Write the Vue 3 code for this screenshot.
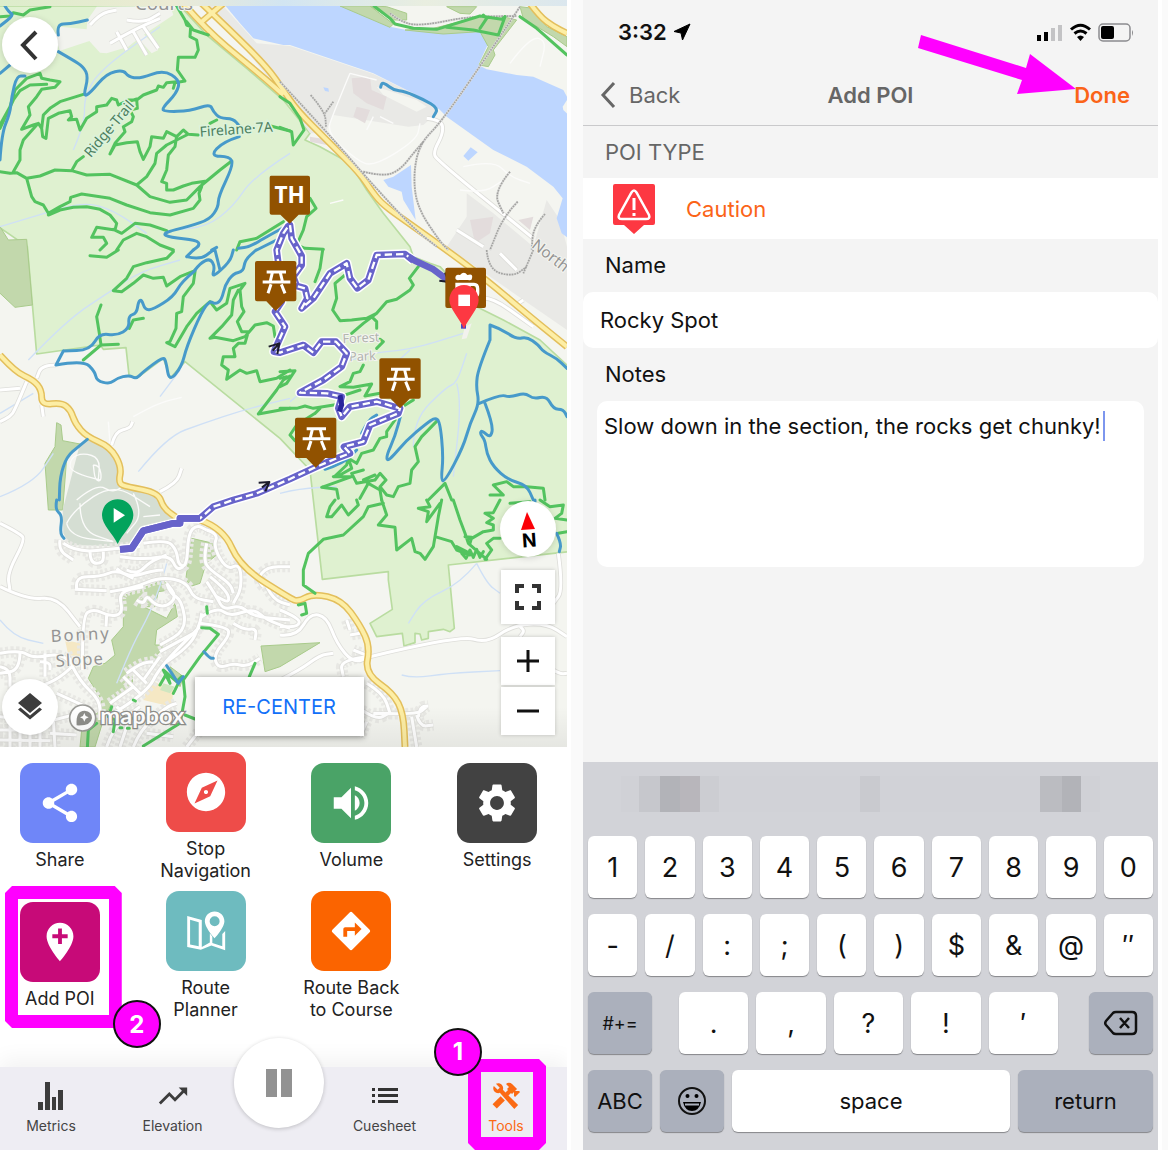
<script setup>
import { ref } from "vue";

const name = ref("Rocky Spot");
const notes = ref("Slow down in the section, the rocks get chunky!");

// Turns "Mx,y x,y ..." polylines into soft curves through the midpoints
function smooth(lines) {
  return lines
    .split("M")
    .filter((line) => line.trim())
    .map((line) => {
      const pts = line.trim().split(/\s+/).map((p) => p.split(",").map(Number));
      let d = `M${pts[0]}`;
      for (let i = 1; i < pts.length - 1; i++) {
        const [x, y] = pts[i];
        const [nx, ny] = pts[i + 1];
        d += `Q${x},${y} ${(x + nx) / 2},${(y + ny) / 2}`;
      }
      return `${d}L${pts[pts.length - 1]}`;
    })
    .join("");
}

// Map geometry, 3 units per css pixel, cut into six tiles
const tiles = [
  {
    x: 0,
    y: 0,
    green:
      "M0,50 30,48 40,38 70,45 90,30 150,20 M0,375 30,320 45,270 80,235 120,220 125,235 150,240 180,245 165,262 125,268 110,290 85,320 90,345 65,388 100,375 115,370 125,385 128,410 138,415 145,355 175,340 210,332 215,350 205,360 230,358 240,390 260,355 290,335 290,320 320,315 335,295 350,300 355,315 385,300 410,300 430,285 470,270 475,258 490,262 500,248 530,245 M125,385 130,345 150,325 180,305 250,283 M0,385 40,300 60,272 90,255 140,253 M110,375 70,420 60,450 60,480 40,515 M0,515 30,520 50,518 80,535 120,528 165,510 215,512 260,525 330,523 410,555 440,530 465,490 470,460 500,435 560,405 M215,512 230,485 250,470 M385,305 410,297 412,325 390,330 400,350 395,365 370,380 375,395 345,430 330,462 345,435 380,428 412,425 420,455 430,478 450,440 455,410 490,415 500,395 530,410 550,390 565,403 595,405 M530,408 525,440 505,465 500,510 485,545 500,550 500,570 520,570 550,558 575,550 620,543 660,510 695,483 M410,555 450,590 510,607 560,600 600,560 620,543 M80,535 95,590 105,605 130,615 145,640 180,620 210,605 212,592 245,582 330,595 380,615 450,638 510,645 580,625 600,600 597,580 605,560 M145,645 180,630 220,622 260,620 300,628 330,645 350,670 345,690 290,682 275,712 310,712 320,730 300,750 M340,688 365,700 405,670 450,675 500,692 M350,750 370,720 410,700 440,710 480,735 520,750 M530,18 555,60 560,75 572,80 570,110 590,120 595,150 585,172 535,172 532,210 555,243 525,248 520,265 M560,65 580,90 625,105 M630,370 650,360 M812,378 870,393 M710,750 720,725 770,715 850,665",
    blue:
      "M15,18 25,35 42,45 0,78 M175,105 170,72 210,72 262,60 M175,155 215,178 250,200 265,230 250,290 270,280 320,220 370,210 385,230 420,236 490,210 540,240 530,280 485,325 495,335 570,333 630,312 640,335 660,355 700,356 718,378 M718,410 670,425 630,468 690,470 700,495 655,590 655,620 630,658 570,678 485,700 510,712 590,720 600,735 580,750 M0,480 5,400 30,340 35,290 50,228 75,228 M0,220 30,195 M865,675 800,710 750,740 715,745 M870,700 800,735 770,750 M635,750 650,742",
  },
  {
    x: 840,
    y: 0,
    green:
      "M282,18 330,55 345,72 400,85 470,88 600,48 665,58 675,50 M500,82 580,90 655,105 675,50 M600,85 620,55 610,45 M720,50 770,85 861,165 M0,290 30,310 60,355 72,390 40,435 35,395 0,382 M90,595 108,625 80,650 70,690 50,735 75,745 130,748",
    blue: "M302,262 304,248 318,252 340,270 375,275 430,298 475,325 460,350",
  },
  {
    x: 0,
    y: 750,
    green:
      "M270,17 320,22 355,0 M520,5 500,25 440,38 400,50 380,85 340,122 365,125 400,100 430,75 460,85 490,82 500,108 540,80 585,62 M585,65 580,100 550,140 545,185 530,190 528,235 510,275 500,278 525,290 560,230 590,190 630,155 650,180 680,160 690,115 735,100 720,120 725,170 732,185 712,215 725,245 745,245 M715,120 700,150 695,195 665,230 630,265 645,262 700,272 735,260 765,225 800,218 820,228 825,260 M745,245 735,280 715,280 700,295 705,320 670,320 665,345 685,360 680,388 720,360 740,370 770,362 780,395 830,385 870,360 M870,378 850,390 830,420 775,492 870,475 M303,165 290,200 298,250 303,285 355,283 M303,285 250,330 M388,235 400,210 430,205",
    blue:
      "M585,62 545,95 520,140 460,178 435,180 425,148 415,155 410,190 385,198 388,235 350,257 298,250 270,300 190,303 M190,303 168,345 M168,345 250,330 285,365 290,392 330,402 350,385 388,375 408,387 430,365 490,320 498,335 508,395 545,350 560,290 605,185 630,152 645,163 665,150 675,105 700,70 730,65 735,30 768,0 M585,60 600,40 630,25 645,50 635,85 690,35 700,0 M560,20 600,30 640,0 M560,20 580,0 M645,0 660,60 M262,568 235,590 200,620 180,680 178,750",
  },
  {
    x: 840,
    y: 750,
    green:
      "M128,0 120,55 105,95 M195,75 165,100 170,145 158,180 180,212 215,210 260,205 290,190 320,155 350,148 390,120 400,105 388,85 415,50 M290,190 250,220 215,250 M275,200 290,215 290,235 M300,268 310,275 290,295 M250,345 240,365 220,370 210,395 180,410 220,412 275,402 255,438 300,430 M180,440 240,420 M0,475 50,475 75,468 100,475 180,462 M0,365 45,362 20,400 0,410 M400,450 360,475 M345,510 320,545 320,560 300,565 280,600 245,610 230,640 205,625 215,655 180,675 160,680 215,680 125,712 170,718 175,745 M472,512 440,545 425,560 405,590 415,635 395,660 390,700 355,710 340,740 320,735 300,710 318,690 300,670 285,690 230,700 215,670 250,660 M240,745 265,700 300,720 305,750 M445,750 495,700 515,750 M630,735 670,735 640,705 680,695 700,710 740,710 790,715 795,750 M105,490 120,475 M105,490 50,525 30,555 45,572 M0,385 20,380 M205,622 200,645 165,678 M265,700 250,690 285,675",
    blue:
      "M630,270 630,225 M630,225 660,235 710,268 740,260 775,285 790,305 830,325 861,355 M630,270 595,355 588,410 598,460 570,520 550,590 495,695 483,690 490,620 480,515 465,503 440,520 380,570 325,635 318,620 345,560 365,485 M598,460 660,433 690,442 735,428 760,447 800,438 820,477 850,478 861,500 M615,460 640,525 632,565 605,540 600,552 615,570 620,610 640,650 685,690 740,705 760,750 M245,550 265,510 290,495 M135,658 190,640 230,600",
  },
  {
    x: 0,
    y: 1500,
    green:
      "M605,383 630,385 655,403 600,470 550,540 555,590 545,645 540,670 430,738 M555,645 585,657 M620,320 622,340 M765,490 748,530 M262,745 265,690 290,670 M480,555 500,520 510,550 490,510 530,545 545,530 520,580 M335,620 325,650 345,660 340,695 M360,683 366,683 M382,685 388,685 M400,600 406,603 M385,655 400,655",
    blue: "M170,0 165,30 187,45 180,100 192,115 M500,497 535,550 M535,550 550,530 M612,455 630,475 640,475",
  },
  {
    x: 840,
    y: 1500,
    green:
      "M310,10 265,20 250,50 190,105 130,118 85,160 70,210 70,255 105,280 M65,345 80,340 75,310 55,315 M140,50 150,20 165,0 M140,50 155,50 185,15 205,45 235,15 230,0 M305,0 320,45 295,75 345,82 350,150 395,115 405,155 420,160 435,178 460,140 465,110 475,50 485,0 M480,10 440,65 445,35 415,25 450,20 440,0 M465,110 515,125 530,150 570,165 M520,0 540,60 555,100 565,130 620,178 M530,140 560,155 545,160 558,175 570,150 580,172 590,148 600,172 610,155 M570,118 610,95 640,90 640,75 620,68 640,55 615,40 640,38 660,0 M615,178 635,150 620,130 640,115 660,115 M780,0 810,20 850,15 845,40 825,55 861,60 M835,100 861,95 M690,10 750,5 M555,110 575,112 570,130",
    blue: "M830,100 844,130 838,155 M765,0 765,5",
  },
].map((tile) => ({ ...tile, blue: smooth(tile.blue) }));

const route =
  "M360,1648 395,1645 430,1592 520,1570 540,1570 540,1555 600,1555 640,1520 700,1500 770,1480 870,1437 950,1400 1010,1375 1050,1360 1032,1340 1090,1325 1110,1275 1195,1240 1200,1225 1130,1205 1050,1220 1025,1250 1015,1225 1025,1190 980,1180 900,1178 970,1140 1025,1100 1040,1060 1008,1025 965,1025 940,1058 910,1035 840,1058 822,1055 855,980 825,935 845,905 840,830 830,750 850,700 865,678 870,675 875,715 905,768 905,795 880,830 890,858 915,865 922,895 905,925 940,895 990,820 1040,790 1050,835 1072,865 1105,840 1130,765 1215,762 1240,782";

const routeSolid =
  "M360,1648 395,1645 430,1592 520,1570 540,1570 540,1555 600,1555 M1225,770 1245,782 1300,808 1345,842";

const yellowRoads = smooth(
  "M550,10 620,90 740,190 800,240 850,285 M605,10 690,90 800,200 850,270 890,330 990,430 1080,520 1120,580 1150,615 1220,665 1340,750 1460,840 1590,950 1701,1040 M670,10 600,70 M0,1065 45,1115 100,1140 125,1170 125,1215 185,1208 212,1230 225,1270 260,1310 330,1340 365,1400 355,1450 380,1460 475,1478 490,1525 540,1560 M600,1560 670,1585 720,1700 870,1795 895,1805 940,1780 1025,1800 1080,1875 1110,1940 1095,2020 1180,2080 1210,2140 1215,2241 M1590,10 1620,50 1660,80 1701,100"
);

const lanes = smooth(
  "M0,1570 60,1600 75,1620 22,1720 30,1770 M0,1760 80,1800 170,1790 240,1880 M80,1145 45,1230 30,1250 0,1265 M168,1095 125,1095 110,1135 M0,1170 60,1165 M125,1215 130,1250 M335,1335 345,1295 390,1285 398,1265 M480,1475 530,1450 545,1405 M1110,1970 1380,1905 1460,1930 1540,1875 1640,1870 1701,1910 M840,2040 900,2010 960,1965 1000,1960 M840,1830 900,1855 895,1880 840,1880 M840,1905 890,1910 930,1840 980,1850 1010,1930 1060,1990 1110,1970 M1675,1660 1690,1770 1660,1810 M1560,1880 1575,1890 1560,1910 M1660,2010 1680,2022 1701,2020 M1280,355 1325,360 1330,400 1300,455 1310,480 1600,715 M1370,690 1450,740 M1430,900 1460,880 1600,980 M1540,920 1570,900 M1500,760 1550,810 M270,75 300,40 350,30 M350,95 380,150 M330,130 400,90 480,55 M400,95 440,165 M430,80 475,145 M380,60 430,70 480,40"
);

const blocks = smooth(
  "M0,1960 60,1950 100,1975 180,1960 220,1995 M60,1955 60,2010 0,2020 M180,1620 175,1650 220,1680 M190,1630 230,1658 350,1645 420,1640 M270,1652 270,1690 310,1690 310,1655 M430,1630 500,1618 530,1650 535,1695 560,1700 565,1600 590,1575 620,1590 M360,1670 430,1680 510,1665 530,1710 550,1700 M380,1710 410,1725 450,1685 500,1665 M350,1705 380,1735 460,1712 490,1710 M230,1765 225,1730 300,1730 350,1710 400,1735 M225,1768 320,1772 M330,1775 400,1765 480,1730 560,1745 580,1795 640,1805 M248,2010 245,1850 280,1825 330,1850 370,1840 355,1775 430,1760 M320,1845 318,1880 M410,1800 430,1815 440,1785 465,1815 500,1820 530,1790 500,1750 M500,1750 510,1780 545,1800 560,1890 480,1935 M480,1955 580,1900 M500,1985 570,1940 600,1870 605,1840 M620,1590 655,1600 640,1640 680,1710 720,1690 725,1765 700,1810 M620,1630 610,1680 630,1710 690,1750 700,1780 M630,1730 680,1770 690,1810 650,1790 M620,1745 650,1790 670,1830 720,1815 760,1850 870,1860 M605,1850 650,1820 690,1850 760,1825 800,1860 870,1885 M600,1870 680,1880 690,1905 640,1965 655,2005 700,1990 740,2000 780,1975 M700,1870 730,1890 770,1885 765,1920 M790,1760 770,1740 800,1700 870,1700 M800,1760 820,1800 870,1815 M340,2140 440,2080 480,2000 600,1880 M400,2010 440,2050 M370,2030 420,2080 M380,2020 420,1990 460,1985 M430,2040 480,1970 M330,2110 400,2060 M350,2120 400,2170 M215,1995 240,2045 300,2100 300,2160 M220,1995 170,2050 20,2080 M0,2000 30,2005 30,2060 M120,1985 150,1985 150,2010 M135,1960 135,2030 M200,1960 215,1990 M170,2080 280,2130 M160,2160 240,2140 M0,2150 60,2155 60,2241 M30,2140 30,2241 M120,2150 120,2241 M90,2150 90,2241 M0,2190 130,2190 M0,2220 150,2222 M150,2200 230,2205 M160,2160 165,2241 M400,2241 420,2190 500,2120 530,2110 M320,2241 340,2180 420,2120 M360,2241 380,2180 M440,2200 520,2210 M560,2241 600,2190 M1110,1970 1060,1950 M1080,1900 1050,1905 M1040,1860 1050,1890 M1085,2130 1130,2160 1165,2140 M1100,2050 1150,2080 1170,2140 M1120,2140 1250,2145 1280,2120 M1250,2145 1260,2180 1300,2175 M1235,2150 1250,2241 M1255,2150 1260,2120 1285,2118 M1100,2165 1080,2210 M1100,1970 1020,1980 1030,2030"
);

const campus = smooth(
  "M300,1440 210,1420 210,1375 250,1358 300,1375 295,1440 M280,1395 300,1395 305,1445 285,1440 280,1395 M230,1500 290,1450 340,1480 380,1450 M240,1510 240,1590 340,1625 M400,1480 430,1540 380,1600 M200,1570 220,1530 340,1450 450,1520 M200,1570 210,1610 340,1625 M480,1545 430,1550 M1050,220 1000,340 980,400 1070,480 1120,500 1250,420 1260,370 M1050,220 1130,240 M1140,350 1180,370 M1120,350 1100,390 M1390,500 1480,480 1530,530 1590,550 M1380,570 1450,580 1510,540 M1530,190 1590,110 1640,120 1620,200 M990,610 1030,600 M400,1250 470,1210 545,1192 M325,1265 330,1330"
);

const streams = smooth(
  "M0,680 100,650 250,605 340,630 440,700 M220,450 255,370 252,290 300,210 480,80 M870,460 760,530 700,620 620,680 520,690 M85,1080 200,960 330,875 420,815 540,780 M1240,1340 1240,1260 1340,1160 1370,1150 1400,1060 M870,1205 960,1130 1090,1060 1230,1050 1390,1000 M1370,1150 1385,1200 1360,1430 M480,1190 540,1110 M415,1415 500,1310 610,1270 730,1230 870,1195 M840,1480 900,1465 1010,1460 M0,1240 100,1180 M1430,1690 1380,1750 1270,1800 1225,1870 M1430,1690 1460,1750 1500,1780 M1205,2025 1240,2035 1340,2020 1500,2012 M0,1490 100,1450 160,1360 M0,1860 40,1910 130,1930 M1230,1050 1170,1105 M500,1690 490,1730 450,1840 400,1930 350,2050"
);

const rails = smooth(
  "M1560,20 1440,200 1320,370 1260,430 1240,520 1250,620 1320,725 1345,750 M1090,515 1150,530 1200,510 1240,460 1270,425 M840,245 980,395 1110,545 1240,685 1310,740 M932,285 975,335 978,380 M1000,305 975,340 M1530,515 1480,575 1510,640 M1553,605 1510,650 1470,750 M1635,642 1600,680 1595,750 M1460,750 1465,810 1540,830 1580,800 M1600,750 1570,820 M1170,40 1210,72 1280,75 1400,50 1550,48"
);

const picnicMarkers = [
  { x: 765, y: 783 },
  { x: 1138, y: 1075 },
  { x: 885, y: 1253 },
];

const tools = [
  {
    label: "Share",
    color: "#6f86f8",
    icon: "M18 16.08c-.76 0-1.44.3-1.96.77L8.91 12.7c.05-.23.09-.46.09-.7s-.04-.47-.09-.7l7.05-4.11c.54.5 1.25.81 2.04.81 1.66 0 3-1.34 3-3s-1.34-3-3-3-3 1.34-3 3c0 .24.04.47.09.7L8.04 9.81C7.5 9.31 6.79 9 6 9c-1.66 0-3 1.34-3 3s1.34 3 3 3c.79 0 1.5-.31 2.04-.81l7.12 4.16c-.05.21-.08.43-.08.65 0 1.61 1.31 2.92 2.92 2.92s2.92-1.31 2.92-2.92-1.31-2.92-2.92-2.92z",
  },
  {
    label: "Stop\nNavigation",
    color: "#ee4c49",
    icon: "M12 10.9c-.61 0-1.1.49-1.1 1.1s.49 1.1 1.1 1.1c.61 0 1.1-.49 1.1-1.1s-.49-1.1-1.1-1.1zM12 2C6.48 2 2 6.48 2 12s4.48 10 10 10 10-4.48 10-10S17.52 2 12 2zm2.19 12.19L6 18l3.81-8.19L18 6l-3.81 8.19z",
  },
  {
    label: "Volume",
    color: "#4aa367",
    icon: "M3 9v6h4l5 5V4L7 9H3zm13.5 3c0-1.77-1.02-3.29-2.5-4.03v8.05c1.48-.73 2.5-2.25 2.5-4.02zM14 3.23v2.06c2.89.86 5 3.54 5 6.71s-2.11 5.85-5 6.71v2.06c4.01-.91 7-4.49 7-8.77s-2.99-7.86-7-8.77z",
  },
  {
    label: "Settings",
    color: "#424242",
    icon: "M19.14 12.94c.04-.3.06-.61.06-.94 0-.32-.02-.64-.07-.94l2.03-1.58c.18-.14.23-.41.12-.61l-1.92-3.32c-.12-.22-.37-.29-.59-.22l-2.39.96c-.5-.38-1.03-.7-1.62-.94l-.36-2.54c-.04-.24-.24-.41-.48-.41h-3.84c-.24 0-.43.17-.47.41l-.36 2.54c-.59.24-1.13.57-1.62.94l-2.39-.96c-.22-.08-.47 0-.59.22L2.74 8.87c-.12.21-.08.47.12.61l2.03 1.58c-.05.3-.09.63-.09.94s.02.64.07.94l-2.03 1.58c-.18.14-.23.41-.12.61l1.92 3.32c.12.22.37.29.59.22l2.39-.96c.5.38 1.03.7 1.62.94l.36 2.54c.05.24.24.41.48.41h3.84c.24 0 .44-.17.47-.41l.36-2.54c.59-.24 1.13-.56 1.62-.94l2.39.96c.22.08.47 0 .59-.22l1.92-3.32c.12-.22.07-.47-.12-.61l-2.01-1.58zM12 15.6c-1.98 0-3.6-1.62-3.6-3.6s1.62-3.6 3.6-3.6 3.6 1.62 3.6 3.6-1.62 3.6-3.6 3.6z",
  },
  {
    label: "Add POI",
    color: "#c70a78",
    step: 2,
    icon: "M12 2C8.14 2 5 5.14 5 9c0 5.25 7 13 7 13s7-7.75 7-13c0-3.86-3.14-7-7-7zm4 8h-3v3h-2v-3H8V8h3V5h2v3h3v2z",
  },
  {
    label: "Route\nPlanner",
    color: "#6ebbbf",
    icon: "M2.2 4.2 9.8 6.2V20.3L14 18V13.2L15.3 15V18.2L20.5 20V13.5L22 12V22L14.8 19.5 9.3 21.8 2.2 20.3zM3.7 6.1V19L8.2 20V7.4zM16.5 1.8C19.4 1.8 21.6 4 21.6 6.9 21.6 10.3 16.5 15.8 16.5 15.8S11.4 10.3 11.4 6.9C11.4 4 13.6 1.8 16.5 1.8zM16.5 4.3A2.6 2.6 0 1 0 16.5 9.5 2.6 2.6 0 1 0 16.5 4.3z",
  },
  {
    label: "Route Back\nto Course",
    color: "#fb6400",
    icon: "M21.71 11.29l-9-9c-.39-.39-1.02-.39-1.41 0l-9 9c-.39.39-.39 1.02 0 1.41l9 9c.39.39 1.02.39 1.41 0l9-9c.39-.38.39-1.01 0-1.41zM14 14.5V12h-4v3H8v-4c0-.55.45-1 1-1h5V7.5l3.5 3.5-3.5 3.5z",
  },
];

// Blurred word suggestions above the keys
const suggestions = [
  { size: 38, color: "#d2d3d8" },
  { size: 18, color: "#d0d1d6" },
  { size: 21, color: "#c6c7cc" },
  { size: 20, color: "#b2b3b8" },
  { size: 20, color: "#b8b6bb" },
  { size: 19, color: "#cccdd2" },
  { size: 141, color: "#d1d2d7" },
  { size: 20, color: "#c9cacf" },
  { size: 160, color: "#d1d2d7" },
  { size: 22, color: "#bbbcc1" },
  { size: 19, color: "#b2b3b8" },
  { size: 19, color: "#d0d1d6" },
  { size: 58, color: "#d2d3d8" },
];

const keyRows = [
  ["1", "2", "3", "4", "5", "6", "7", "8", "9", "0"],
  ["-", "/", ":", ";", "(", ")", "$", "&", "@", "″"],
];
const punctuation = [".", ",", "?", "!", "′"];
</script>

<template>
  <main class="screens">
    <section class="phone">
      <div class="map">
        <svg class="map-art" viewBox="0 0 1701 2241" role="img" aria-label="Trail map">
          <defs>
            <linearGradient id="topStrip">
              <stop offset="0" stop-color="#dcedcb" />
              <stop offset="0.3" stop-color="#ecebd4" />
              <stop offset="0.5" stop-color="#d2e5f2" />
              <stop offset="0.75" stop-color="#e9eee0" />
              <stop offset="1" stop-color="#dbe7ee" />
            </linearGradient>
            <linearGradient id="bottomFade" x2="0" y2="1">
              <stop offset="0" stop-color="#000" stop-opacity="0" />
              <stop offset="1" stop-color="#000" stop-opacity="0.06" />
            </linearGradient>
          </defs>
          <rect width="1701" height="2241" fill="#f4f5f0" />

          <!-- park -->
          <path
            class="park"
            d="M-5,18 540,18 620,105 740,205 850,300 930,400 915,420 960,440 1050,490 1100,570 1150,640 1230,740 1240,770 1290,790 1320,800 1430,920 1510,960 1620,1020 1706,1100 V1655 L1345,1695 1363,1885 1350,1895 1330,1888 1285,1895 1285,1915 1265,1920 1260,1902 1245,1900 1245,1928 1212,1938 1207,1900 1130,1910 1110,1870 1177,1828 1165,1740 1165,1715 967,1738 940,1500 930,1410 840,1315 555,1085 510,1135 490,1075 410,1135 387,1125 378,1043 310,1048 300,1035 110,1062 82,740 -5,680z"
          />
          <path
            d="M262,60 290,20 540,18 515,30 520,45 430,105 410,120 385,140 320,160 300,158 268,123 180,152 165,110 180,80 260,88z M400,100 420,90 475,150 455,160z"
            fill="#f2f3ee"
          />
          <path
            class="wood"
            d="M-5,672 25,720 80,718 97,915 45,922 -5,875z M170,1268 183,1275 188,1322 240,1332 200,1375 188,1530 145,1530 135,1390 165,1340z M575,1615 640,1630 650,1665 618,1690 600,1750 575,1758 557,1740z M365,1790 490,1740 510,1770 475,1775 465,1820 430,1820 500,1855 525,1810 532,1850 470,1890 465,1935 498,1935 470,1965 470,1985 415,1995 395,2025 400,2060 345,2090 310,2160 285,2241 240,2241 245,2190 300,2130 305,2100 265,2035 280,2000 315,1990 345,1965 335,1920 370,1880 370,1830z M783,1938 960,1928 840,2000 795,2015z M510,2000 550,2030 540,2060z"
          />
          <path
            d="M240,1332 262,1318 330,1345 358,1410 362,1450 475,1480 490,1520 540,1560 430,1590 400,1640 210,1635 190,1600 188,1530z"
            fill="#d5ded3"
          />
          <path d="M430,2100 450,2040 520,2070 515,2120z M195,1920 240,1930 240,1970 205,1965z" fill="#f5e8c4" />
          <path d="M490,2050 525,2060 510,2080 480,2070z" fill="#cfe6c0" />

          <!-- river and industrial bank -->
          <path
            d="M640,10 670,18 770,130 870,138 1120,222 1280,300 1315,335 1270,375 1225,380 1000,345 975,400 930,400 850,285 690,95 600,18z M1400,580 1480,640 1600,740 1640,600 1680,660 1701,740 V990 L1340,740 1400,650z"
            fill="#e9e9e6"
          />
          <path d="M1130,260 1250,300 1280,320 1250,335 1150,285z" fill="#f4f5f0" />
          <path
            class="water"
            d="M670,10 H1020 L1170,80 1220,90 1440,95 1465,130 1435,195 1460,208 1550,225 1600,230 1690,270 1701,290 V712 L1685,700 1670,655 1688,595 1660,560 1580,500 1480,450 1340,350 1320,330 1280,300 1120,220 870,135 850,135 760,115 720,70z M1150,540 1180,530 1233,495 1235,560 1247,660 1210,600 1205,575 1165,560z M1390,468 1412,442 1433,457 1405,482z M970,262 985,265 987,275 975,273z"
          />
          <path d="M1688,320 1701,300 1706,345 1690,330z" fill="#f4f5f0" />
          <path
            class="wood"
            d="M1020,18 H1110 L1180,72 1170,82z M1110,18 1160,20 1220,40 1220,60 1180,60z M1340,20 H1430 L1410,42 1380,40z M1215,90 1300,85 1440,50 1510,50 1550,60 1480,150 1485,165 1465,200 1437,195 1465,140 1440,95 1330,102z M1560,20 1600,25 1640,80 1701,110 V140 L1660,110 1570,55z"
          />
          <path
            d="M1055,235 1110,230 1115,270 1160,290 1150,330 1100,310 1060,280z M1070,320 1110,330 1095,370 1060,350z M1410,660 1480,650 1470,700 1425,730z M1555,660 1600,650 1590,690z M930,410 990,420 980,435 930,425z"
            fill="#e3dcdc"
          />

          <path class="stream" :d="streams" />
          <path class="houses" :d="blocks" />
          <path class="street-case" :d="blocks" />
          <path class="street-case" :d="lanes" />
          <path class="street" :d="blocks" />
          <path class="street" :d="lanes" />
          <path class="campus" :d="campus" />
          <path class="road-case" :d="yellowRoads" />
          <path class="road" :d="yellowRoads" />
          <path class="rail-base" :d="rails" />
          <path class="rail" :d="rails" />

          <!-- bike trails -->
          <g v-for="(tile, i) in tiles" :key="i" :transform="`translate(${tile.x} ${tile.y})`">
            <path class="trail trail-green" :d="tile.green" />
            <path class="trail trail-blue" :d="tile.blue" />
          </g>

          <!-- place names -->
          <g class="place">
            <text x="405" y="31" font-size="56">Courts</text>
            <text x="153" y="1926" font-size="50" letter-spacing="6" transform="rotate(-3 153 1926)">Bonny</text>
            <text x="168" y="2000" font-size="50" letter-spacing="3" transform="rotate(-3 168 2000)">Slope</text>
            <text x="1028" y="1030" font-size="38" transform="rotate(-3 1028 1030)" class="pale">Forest</text>
            <text x="1048" y="1084" font-size="38" transform="rotate(-3 1048 1084)" class="pale">Park</text>
            <text x="1592" y="740" font-size="46" transform="rotate(38 1592 740)">North</text>
          </g>
          <g class="trail-name">
            <text x="272" y="475" font-size="42" transform="rotate(-50 272 475)">Ridge·Trail</text>
            <text x="600" y="410" font-size="42" transform="rotate(-4 600 410)">Firelane·7A</text>
          </g>

          <!-- recorded course -->
          <path class="route-halo" :d="route" />
          <path class="route" :d="route" />
          <path class="route-dash" :d="route" />
          <path class="route-solid" :d="routeSolid" />
          <path d="M1020,1185 1025,1215 1018,1235" stroke="#29259c" stroke-width="15" fill="none" />
          <path class="chevron" d="M806,1040 838,1030 832,1062 M838,1030 818,1052 M776,1448 808,1446 796,1474 M808,1446 786,1462 M1318,842 1348,846 1335,818" />
          <path d="M1385,1018 1395,980 1415,970 1400,1015z" fill="#f2f2ee" />
          <rect x="1383" y="972" width="15" height="14" fill="#4b45c4" />

          <!-- poi markers -->
          <g class="marker">
            <path d="M813,527H924q6,0 6,6V638q0,6 -6,6H896L869,671 841,644H815q-6,0 -6,-6V533q0,-6 4,-6z" />
            <text x="869" y="610" text-anchor="middle">TH</text>
          </g>
          <g v-for="m in picnicMarkers" :key="m.x" class="marker" :transform="`translate(${m.x} ${m.y})`">
            <path d="M6,0H118q6,0 6,6V115q0,6 -6,6H91L62,150 34,121H6q-6,0 -6,-6V6q0,-6 6,-6z" />
            <path class="picnic" d="M35,33H93 M23,63H106 M52,35 46,60 M76,35 82,60 M48,70 39,97 M79,70 90,97" />
          </g>
          <g class="marker">
            <path d="M1342,803H1452q6,0 6,6V918q0,6 -6,6H1342q-6,0 -6,-6V809q0,-6 6,-6z" />
            <path
              d="M1366,835q0,-14 14,-10q12,-14 22,0q18,-6 14,10q0,8 -12,5H1378q-12,2 -12,-5z M1366,848H1412V905H1366z M1412,848h10q16,0 16,18v14q0,12 -12,12h-14v-10h12q4,0 4,-6v-10q0,-8 -6,-8h-10z"
              class="mug"
            />
          </g>
          <path
            d="M1392,855C1417,855 1436,875 1436,900 1436,925 1406,955 1392,986 1378,955 1348,925 1348,900 1348,875 1367,855 1392,855z"
            fill="#fd3842"
          />
          <rect x="1375" y="884" width="35" height="34" fill="#fff" />
          <path
            d="M353,1498C380,1498 400,1519 400,1546 400,1575 368,1600 353,1632 338,1600 306,1575 306,1546 306,1519 326,1498 353,1498z"
            fill="#02a35c"
          />
          <path d="M341,1524 375,1546 341,1568z" fill="#fff" />

          <!-- attribution -->
          <g class="attribution">
            <circle cx="248" cy="2154" r="39" fill="#fff" stroke="#9a9a96" stroke-width="5" />
            <path d="M230,2176q-4,-44 24,-44q22,2 22,22q-2,24 -46,22z" fill="#8e8e8a" />
            <path d="M253,2139l4,9 9,4 -9,4 -4,9 -4,-9 -9,-4 9,-4z" fill="#fff" />
            <text x="301" y="2172">mapbox</text>
          </g>
          <rect y="2120" width="1701" height="121" fill="url(#bottomFade)" />
          <rect width="1701" height="18" fill="url(#topStrip)" />
        </svg>

        <button class="round map-back" aria-label="Back to rides">
          <svg width="56" height="56" viewBox="0 0 56 56">
            <path d="M34,15 21,28 34,42" fill="none" stroke="#333" stroke-width="4" />
          </svg>
        </button>
        <button class="round map-layers" aria-label="Map layers">
          <svg width="56" height="56" viewBox="0 0 56 56" fill="#3c3c3c">
            <path d="M28,14 40,24 28,34 16,24z M18.5,28.5 28,36.5 37.5,28.5 40,30.5 28,40.5 16,30.5z" />
          </svg>
        </button>
        <button class="recenter">RE-CENTER</button>
        <div class="map-controls">
          <button class="round" aria-label="North up">
            <svg width="56" height="56" viewBox="0 0 56 56">
              <path d="M27,11 35,28 21,29z" fill="#fb0007" />
              <text x="22" y="46" class="north" transform="rotate(-4 28 40)">N</text>
            </svg>
          </button>
          <button class="square" aria-label="Full screen">
            <svg width="26" height="26" viewBox="0 0 26 26" fill="none" stroke="#333" stroke-width="4">
              <path d="M2,9V2H9 M17,2H24V9 M24,17V24H17 M9,24H2V17" />
            </svg>
          </button>
          <div class="zoom">
            <button aria-label="Zoom in">
              <svg width="24" height="24" viewBox="0 0 24 24"><path d="M12,1V23 M1,12H23" stroke="#111" stroke-width="3" /></svg>
            </button>
            <button aria-label="Zoom out">
              <svg width="24" height="24" viewBox="0 0 24 24"><path d="M1,12H23" stroke="#111" stroke-width="3" /></svg>
            </button>
          </div>
        </div>
      </div>

      <div class="tool-grid">
        <button v-for="tool in tools" :key="tool.label" class="tool">
          <span class="tile" :style="{ background: tool.color }">
            <svg width="46" height="46" viewBox="0 0 24 24"><path fill="#fff" fill-rule="evenodd" :d="tool.icon" /></svg>
          </span>
          <span class="tool-label">{{ tool.label }}</span>
          <template v-if="tool.step">
            <span class="frame frame-tool"></span>
            <span class="step step-tool">{{ tool.step }}</span>
          </template>
        </button>
      </div>

      <nav class="tabs">
        <button class="tab">
          <svg width="34" height="34" viewBox="0 0 34 34" fill="#3c3c3c">
            <path d="M4,23h5v8H4z M11,3h5v28h-5z M18,18h4v13h-4z M24,11h5v20h-5z" />
          </svg>
          Metrics
        </button>
        <button class="tab">
          <svg width="34" height="34" viewBox="0 0 24 24" fill="#3c3c3c">
            <path d="M16 6l2.29 2.29-4.88 4.88-4-4L2 16.59 3.41 18l6-6 4 4 6.3-6.29L22 12V6z" />
          </svg>
          Elevation
        </button>
        <button class="pause" aria-label="Pause">
          <svg width="28" height="30" viewBox="0 0 28 30" fill="#929292"><path d="M1,1h11v28H1z M16,1h11v28H16z" /></svg>
        </button>
        <button class="tab">
          <svg width="34" height="34" viewBox="0 0 34 34" fill="#333">
            <path d="M4,9h3v3H4z M10,9h20v3H10z M4,15h3v3H4z M10,15h20v3H10z M4,21h3v3H4z M10,21h20v3H10z" />
          </svg>
          Cuesheet
        </button>
        <button class="tab active">
          <svg width="34" height="34" viewBox="0 0 24 24" fill="#fb6a14">
            <g transform="translate(24 0) scale(-1 1)">
              <path d="M12.8 15.2l3-3 5.7 5.7-3 3z" />
              <path
                d="M17.5,10c1.93,0,3.5-1.57,3.5-3.5c0-0.58-0.16-1.12-0.41-1.6l-2.7,2.7L16.4,6.11l2.7-2.7C18.62,3.16,18.08,3,17.5,3 C15.57,3,14,4.57,14,6.5c0,0.41,0.08,0.8,0.21,1.16l-1.85,1.85l-1.78-1.78l0.71-0.71L9.88,5.61L12,3.49 c-1.17-1.17-3.07-1.17-4.24,0L4.22,7.03l1.41,1.41H2.81L2.1,9.15l3.54,3.54l0.71-0.71V9.15l1.41,1.41l0.71-0.71l1.78,1.78 l-6.8,6.8l2.7,2.7L16.34,9.79C16.7,9.92,17.09,10,17.5,10z"
              />
            </g>
          </svg>
          Tools
          <span class="frame frame-tab"></span>
          <span class="step step-tab">1</span>
        </button>
      </nav>
    </section>

    <section class="phone form-phone">
      <div class="status">
        <span class="clock">3:32</span>
        <svg width="18" height="18" viewBox="0 0 18 18"><path d="M17,1 9.5,17 8,10 1,8.5z" stroke="#000" stroke-linejoin="round" /></svg>
        <svg class="signals" width="98" height="22" viewBox="0 0 98 22">
          <path d="M1,14h4v6H1z M8,11h4v9H8z" />
          <path d="M15,7h4v13h-4z M22,4h4v16h-4z" fill="#c3c3c5" />
          <path d="M35,8.5Q44.5,0 54,8.5 M38.5,12.5Q44.5,7.5 50.5,12.5" fill="none" stroke="#000" stroke-width="3" />
          <path d="M41,16Q44.5,13 48,16L44.5,20z" />
          <rect x="63" y="3" width="31" height="17" rx="4" fill="none" stroke="#8b8b8e" stroke-width="1.5" />
          <rect x="65" y="5" width="13" height="13" rx="2" />
          <path d="M96,9q2,2 0,6z" fill="#8b8b8e" />
        </svg>
      </div>

      <header class="nav-bar">
        <button class="nav-back">
          <svg width="16" height="28" viewBox="0 0 16 28"><path d="M14,2 3,14 14,26" fill="none" stroke="#666" stroke-width="3" /></svg>
          Back
        </button>
        <h1>Add POI</h1>
        <button class="nav-done">Done</button>
        <svg class="arrow" width="160" height="62" viewBox="0 0 160 62">
          <path d="M4,1 1,14 105,46 100,60 159,55 113,20 109,34z" fill="#f0f" />
        </svg>
      </header>

      <h2 class="section-title">POI TYPE</h2>
      <button class="type-row">
        <svg width="42" height="50" viewBox="0 0 42 50">
          <path d="M2,0H40q2,0 2,2V39q0,2 -2,2H31L21,50 11,41H2q-2,0 -2,-2V2q0,-2 2,-2z" fill="#fd3842" />
          <path d="M18.5,8.5q2.5,-4 5,0L36,31q1.5,4 -3,4H9q-4.5,0 -3,-4z" fill="none" stroke="#fff" stroke-width="2.5" />
          <path d="M21,14V26 M21,29V32" stroke="#fff" stroke-width="3" />
        </svg>
        Caution
      </button>

      <label for="poi-name" class="field-label">Name</label>
      <input id="poi-name" v-model="name" type="text" class="name-input" />
      <label for="poi-notes" class="field-label">Notes</label>
      <div class="notes-box">
        <textarea id="poi-notes" v-model="notes" spellcheck="false"></textarea>
        <span class="caret"></span>
      </div>

      <div class="keyboard">
        <div class="suggestions">
          <span
            v-for="(s, i) in suggestions"
            :key="i"
            :style="{ flexGrow: s.size, background: s.color }"
          ></span>
        </div>
        <div v-for="row in keyRows" :key="row[0]" class="key-row">
          <button v-for="key in row" :key="key" class="key">{{ key }}</button>
        </div>
        <div class="key-row">
          <button class="key dark side small">#+=</button>
          <div class="key-group">
            <button v-for="key in punctuation" :key="key" class="key">{{ key }}</button>
          </div>
          <button class="key dark side" aria-label="Delete">
            <svg width="34" height="26" viewBox="0 0 34 26" fill="none" stroke="#111" stroke-width="2.5">
              <path d="M12,2H28q4,0 4,4V20q0,4 -4,4H12q-2,0 -3,-1L2,15q-1.5,-2 0,-4L9,3q1,-1 3,-1z M16,8 25,18 M25,8 16,18" />
            </svg>
          </button>
        </div>
        <div class="key-row">
          <button class="key dark side word">ABC</button>
          <button class="key dark side" aria-label="Emoji">
            <svg width="30" height="30" viewBox="0 0 30 30">
              <circle cx="15" cy="15" r="13" fill="none" stroke="#111" stroke-width="2" />
              <circle cx="10.5" cy="10" r="2" />
              <circle cx="19.5" cy="10" r="2" />
              <path d="M6,16H24Q22,25 15,25T6,16z" />
              <path d="M8,18.5H22" stroke="#abb0bc" stroke-width="2" />
            </svg>
          </button>
          <button class="key space word">space</button>
          <button class="key dark return word">return</button>
        </div>
      </div>
    </section>
  </main>
</template>

<style>
body {
  margin: 0;
  background: #fafafa;
}
</style>

<style scoped>
.screens {
  display: grid;
  grid-template-columns: minmax(0, 567fr) minmax(0, 575fr);
  gap: 16px;
  padding-right: 10px;
  min-height: 100vh;
  font-family: Inter, "Liberation Sans", sans-serif;
  color: #111;
}

button {
  border: 0;
  padding: 0;
  background: none;
  color: inherit;
  font: inherit;
}

svg {
  display: block;
}

.phone {
  display: flex;
  flex-direction: column;
  background: #fff;
  box-shadow: 4px 0 0 #fff;
}

/* map */
.map {
  position: relative;
}

.map-art {
  width: 100%;
  height: auto;
}

.map-art path {
  stroke-linejoin: round;
}

.park {
  fill: #dff1d0;
  stroke: #b9dca0;
  stroke-width: 5;
}

.wood {
  fill: #c2d8ac;
  stroke: #a9cb8b;
  stroke-width: 3;
}

.water {
  fill: #bdd6ff;
}

.stream,
.street,
.street-case,
.houses,
.campus,
.road,
.road-case,
.rail,
.rail-base,
.trail,
.route,
.route-halo,
.route-dash,
.route-solid,
.chevron {
  fill: none;
}

.stream {
  stroke: #cfe0f6;
  stroke-width: 4;
}

.houses {
  stroke: #e8e8e4;
  stroke-width: 34;
  stroke-dasharray: 9 7;
}

.street-case {
  stroke: #dededa;
  stroke-width: 14;
}

.street {
  stroke: #fff;
  stroke-width: 9;
}

.campus {
  stroke: #fbfbfa;
  stroke-width: 4;
}

.road-case {
  stroke: #e3bf5c;
  stroke-width: 21;
}

.road {
  stroke: #fdeea5;
  stroke-width: 12;
}

.rail-base {
  stroke: #dededc;
  stroke-width: 7;
}

.rail {
  stroke: #a3a3a1;
  stroke-width: 5;
  stroke-dasharray: 5 3;
}

.trail {
  stroke-width: 9;
  stroke-linecap: round;
}

.trail-green {
  stroke: #53c35f;
}

.trail-blue {
  stroke: #479aca;
}

.route-halo {
  stroke: #fff;
  stroke-width: 29;
}

.route {
  stroke: #6763ca;
  stroke-width: 20;
}

.route-dash {
  stroke: #fff;
  stroke-width: 7;
  stroke-dasharray: 22 12;
}

.route-solid {
  stroke: #6763ca;
  stroke-width: 20;
}

.chevron {
  stroke: #1b1b2a;
  stroke-width: 6;
}

.place {
  fill: #949494;
  stroke: #f4f5f0;
  stroke-width: 6;
  paint-order: stroke;
  font-family: "Noto Sans", sans-serif;
}

.pale {
  fill: #b0b3ad;
}

.trail-name {
  fill: #4d7f5f;
  stroke: #dcf3dc;
  stroke-width: 9;
  paint-order: stroke;
  font-family: "Noto Sans", sans-serif;
}

.marker {
  fill: #915200;
}

.marker text {
  fill: #fff;
  font-family: "Noto Sans", sans-serif;
  font-size: 68px;
  font-weight: 700;
}

.marker .picnic {
  fill: none;
  stroke: #fff;
  stroke-width: 9;
}

.marker .mug {
  fill: #fff;
}

.attribution text {
  fill: #fff;
  stroke: #8e8e8a;
  stroke-width: 8;
  paint-order: stroke;
  font-family: Lato, sans-serif;
  font-size: 71px;
  font-weight: 700;
}

.round {
  width: 56px;
  height: 56px;
  border-radius: 50%;
  background: #fff;
  box-shadow: 0 1px 6px rgba(0, 0, 0, 0.15);
}

.map-back,
.map-layers {
  position: absolute;
  left: 2px;
}

.map-back {
  top: 17px;
}

.map-layers {
  bottom: 12px;
}

.recenter {
  position: absolute;
  left: 50%;
  bottom: 11px;
  width: 169px;
  height: 59px;
  margin-left: -89px;
  background: #fff;
  box-shadow: 0 1px 6px rgba(0, 0, 0, 0.45);
  color: #1270f8;
  font-size: 20px;
}

.map-controls {
  position: absolute;
  right: 11px;
  bottom: 12px;
  display: flex;
  flex-direction: column;
  align-items: center;
  gap: 13px;
}

.north {
  font-size: 19px;
  font-weight: 700;
}

.square,
.zoom button {
  display: grid;
  place-items: center;
  width: 54px;
  background: #fff;
  box-shadow: 0 0 4px rgba(0, 0, 0, 0.2);
}

.square {
  height: 54px;
}

.zoom {
  display: grid;
  gap: 2px;
}

.zoom button {
  height: 48px;
}

/* tools */
.tool-grid {
  display: grid;
  grid-template-columns: repeat(4, minmax(0, 1fr));
  align-items: center;
  gap: 9px 46px;
  padding: 5px 20px 0 10px;
}

.tool {
  position: relative;
  display: flex;
  flex-direction: column;
  align-items: center;
  gap: 6px;
}

.tile {
  display: grid;
  place-items: center;
  width: 80px;
  height: 80px;
  border-radius: 13px;
}

.tool-label {
  font-size: 18px;
  line-height: 22px;
  color: #222;
  white-space: pre;
}

.frame {
  position: absolute;
  border: 13px solid #f0f;
  clip-path: polygon(
    7px 0,
    calc(100% - 7px) 0,
    100% 7px,
    100% calc(100% - 7px),
    calc(100% - 7px) 100%,
    7px 100%,
    0 calc(100% - 7px),
    0 7px
  );
}

.frame-tool {
  inset: -16px -12px -18px -5px;
}

.frame-tab {
  inset: -8px 12px 0 14px;
}

.step {
  position: absolute;
  display: grid;
  place-items: center;
  box-sizing: border-box;
  width: 48px;
  height: 48px;
  border: 2px solid #111;
  border-radius: 50%;
  background: #f0f;
  color: #fff;
  font-size: 24px;
  font-weight: 700;
}

.step-tool {
  right: -51px;
  bottom: -38px;
}

.step-tab {
  left: -20px;
  top: -39px;
}

/* tab bar */
.tabs {
  display: grid;
  grid-template-columns:
    minmax(0, 102fr) minmax(0, 141fr) minmax(0, 72fr)
    minmax(0, 139fr) minmax(0, 104fr);
  height: 83px;
  margin-top: auto;
  padding-right: 9px;
  background: #eeedf3;
  box-shadow: 0 -8px 20px rgba(0, 0, 0, 0.05);
  clip-path: inset(-40px 0 0 0);
}

.tab {
  position: relative;
  display: flex;
  flex-direction: column;
  align-items: center;
  gap: 5px;
  padding-top: 12px;
  font-size: 14px;
  line-height: 16px;
  color: #444;
}

.active {
  color: #fb6a14;
}

.pause {
  display: grid;
  place-items: center;
  justify-self: center;
  width: 90px;
  height: 90px;
  margin-top: -29px;
  border-radius: 50%;
  background: #fff;
  box-shadow: 0 1px 4px rgba(0, 0, 0, 0.2);
}

/* form */
.form-phone {
  background: #f4f4f4;
}

.status {
  display: flex;
  align-items: center;
  gap: 6px;
  padding: 18px 24px 0 35px;
  height: 28px;
}

.clock {
  font-size: 22px;
  font-weight: 600;
}

.signals {
  margin-left: auto;
}

.nav-bar {
  position: relative;
  display: grid;
  grid-template-columns: 1fr auto 1fr;
  align-items: center;
  height: 61px;
  padding: 18px 17px 0;
  border-bottom: 1px solid #c9c9cb;
  color: #666;
  font-size: 22px;
}

.nav-back {
  display: flex;
  align-items: center;
  gap: 13px;
}

.nav-bar h1 {
  margin: 0;
  font-size: 22px;
  font-weight: 600;
}

.nav-done {
  justify-self: end;
  margin-right: 11px;
  color: #fb6418;
  font-weight: 600;
}

.arrow {
  position: absolute;
  right: 81px;
  top: -12px;
}

.section-title {
  margin: 0;
  padding-left: 22px;
  color: #666;
  font-size: 22px;
  font-weight: 400;
  line-height: 52px;
}

.type-row {
  display: flex;
  align-items: center;
  gap: 31px;
  height: 61px;
  padding-left: 30px;
  background: #fff;
  color: #fb6418;
  font-size: 22px;
}

.field-label {
  padding-left: 22px;
  font-size: 22px;
  line-height: 53px;
}

.name-input {
  height: 56px;
  box-sizing: border-box;
  padding: 0 17px;
  border: 0;
  border-radius: 10px;
  background: #fff;
  color: inherit;
  font: inherit;
  font-size: 22px;
}

.notes-box {
  position: relative;
  height: 166px;
  margin: 0 14px;
}

.notes-box textarea {
  box-sizing: border-box;
  width: 100%;
  height: 100%;
  padding: 10px 7px;
  border: 0;
  border-radius: 10px;
  background: #fff;
  color: inherit;
  font: inherit;
  font-size: 22px;
  line-height: 30px;
  resize: none;
}

.caret {
  position: absolute;
  top: 10px;
  left: 506px;
  width: 2px;
  height: 30px;
  background: #7d96ee;
}

/* keyboard */
.keyboard {
  display: flex;
  flex-direction: column;
  gap: 16px;
  margin-top: auto;
  padding-bottom: 18px;
  background: #d2d3d8;
}

.suggestions {
  display: flex;
  height: 36px;
  padding: 14px 0 8px;
}

.key-row {
  display: flex;
  gap: 8px;
  padding: 0 5px;
}

.key {
  display: grid;
  place-items: center;
  flex: 1 1 0;
  min-width: 0;
  height: 62px;
  border-radius: 6px;
  background: #fff;
  box-shadow: 0 1px 1px #85868a;
  color: #111;
  font-size: 27px;
}

.dark {
  background: #abb0bc;
}

.side {
  flex: 0 0 64px;
}

.small {
  font-size: 18px;
}

.word {
  font-size: 22px;
}

.key-group {
  display: flex;
  flex: 1;
  gap: 8px;
  margin: 0 23px 0 19px;
}

.space {
  flex: 1 1 auto;
}

.return {
  flex: 0 0 135px;
}
</style>
